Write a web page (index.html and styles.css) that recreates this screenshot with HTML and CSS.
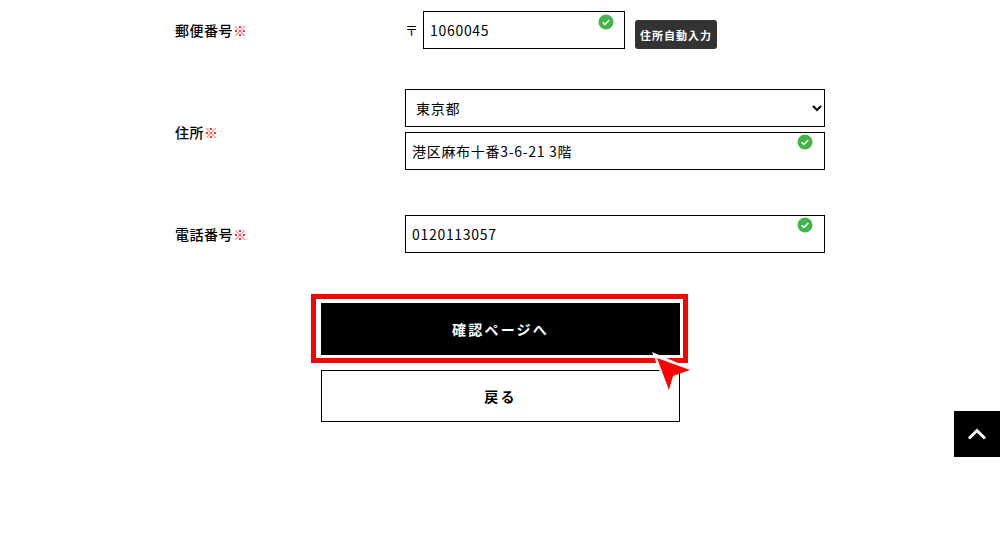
FILE: index.html
```html
<!DOCTYPE html>
<html lang="ja">
<head>
<meta charset="utf-8">
<title>お客様情報入力</title>
<link rel="stylesheet" href="styles.css">
</head>
<body>
<main class="form">
  <div class="row row-postal">
    <div class="label">郵便番号<span class="req">※</span></div>
    <div class="field postal">
      <span class="mark">〒</span>
      <div class="input short"><span>1060045</span>
        <svg class="check" viewBox="0 0 16 16"><circle cx="8" cy="8" r="7.5" fill="#43b548"/><path d="M4.6 8.2l2.3 2.3 4.4-4.6" fill="none" stroke="#fff" stroke-width="1.5"/></svg>
      </div>
      <button class="auto" type="button">住所自動入力</button>
    </div>
  </div>
  <div class="row row-address">
    <div class="label">住所<span class="req">※</span></div>
    <div class="field stack">
      <div class="select"><span>東京都</span>
        <svg class="chev" viewBox="0 0 10 7"><path d="M1 1l4 4 4-4" fill="none" stroke="#000" stroke-width="2"/></svg>
      </div>
      <div class="input"><span>港区麻布十番3-6-21 3階</span>
        <svg class="check" viewBox="0 0 16 16"><circle cx="8" cy="8" r="7.5" fill="#43b548"/><path d="M4.6 8.2l2.3 2.3 4.4-4.6" fill="none" stroke="#fff" stroke-width="1.5"/></svg>
      </div>
    </div>
  </div>
  <div class="row row-phone">
    <div class="label">電話番号<span class="req">※</span></div>
    <div class="field">
      <div class="input"><span>0120113057</span>
        <svg class="check" viewBox="0 0 16 16"><circle cx="8" cy="8" r="7.5" fill="#43b548"/><path d="M4.6 8.2l2.3 2.3 4.4-4.6" fill="none" stroke="#fff" stroke-width="1.5"/></svg>
      </div>
    </div>
  </div>
  <div class="actions">
    <div class="primary-wrap">
      <button class="btn primary" type="button">確認ページへ</button>
      <div class="highlight"></div>
      <svg class="cursor" viewBox="0 0 40 40"><path d="M0 1L14 36 21 23 38 17z" fill="#fff"/><path d="M5 7L17 39 21 25 38 19z" fill="#f00"/></svg>
    </div>
    <button class="btn secondary" type="button">戻る</button>
  </div>
</main>
<a class="totop" href="#top"><svg viewBox="0 0 20 12"><path d="M2 10.500L10 2.500l8 8" fill="none" stroke="#fff" stroke-width="3"/></svg></a>
</body>
</html>
```
FILE: styles.css
```css
* { box-sizing: border-box; }
html, body { margin: 0; padding: 0; height: 100%; overflow: hidden; background: #fff; }
body {
  font-family: "Noto Sans CJK JP", "Noto Sans", sans-serif;
  font-size: 14px;
  color: #000;
  letter-spacing: 0.7px;
}
.form { width: 650px; margin-left: 175px; padding-top: 11px; }
.row { display: grid; grid-template-columns: 230px 420px; align-items: center; }
.row-postal { margin-bottom: 40px; }
.row-address { margin-bottom: 45px; }
.label { font-weight: 500; line-height: 20px; letter-spacing: 0.5px; }
.row-address .label { margin-top: 4px; }
.req { color: #f00; font-weight: 400; }
.field { display: flex; }
.stack { flex-direction: column; gap: 5px; }
.postal { align-items: flex-end; }
.mark { width: 18px; height: 38px; line-height: 38px; font-size: 13px; }
.input, .select {
  position: relative;
  display: flex;
  align-items: center;
  width: 420px;
  height: 38px;
  border: 1px solid #000;
  padding: 0 6px;
  background: #fff;
}
.input.short { width: 202px; }
.select { padding-left: 10px; }
.check { position: absolute; top: 1px; right: 11px; width: 16px; height: 16px; }
.short .check { top: 2px; right: 10px; }
.chev { position: absolute; top: 15px; right: 2px; width: 10px; height: 7px; }
.auto {
  margin-left: 10px;
  width: 82px;
  height: 29px;
  border: 0;
  border-radius: 3px;
  background: #333;
  color: #fff;
  font: 700 11px "Noto Sans CJK JP", sans-serif;
  letter-spacing: 1px;
  padding: 0;
}
.actions { display: flex; flex-direction: column; gap: 15px; margin-left: 146px; margin-top: 50px; width: 359px; }
.primary-wrap { position: relative; height: 52px; }
.btn {
  display: block;
  width: 359px;
  height: 52px;
  font: 700 14px "Noto Sans CJK JP", sans-serif;
  letter-spacing: 2.2px;
  padding: 0;
}
.primary { background: #000; border: 0; color: #fff; }
.secondary { background: #fff; border: 1px solid #000; color: #000; }
.highlight {
  position: absolute;
  left: -10px;
  top: -9px;
  width: 377px;
  height: 69px;
  border: 5px solid #f00;
}
.cursor { position: absolute; left: 331px; top: 48px; width: 40px; height: 40px; }
.totop {
  position: fixed;
  right: 0;
  top: 411px;
  width: 46px;
  height: 46px;
  background: #000;
  display: flex;
  align-items: center;
  justify-content: center;
}
.totop svg { width: 20px; height: 12px; }
```
